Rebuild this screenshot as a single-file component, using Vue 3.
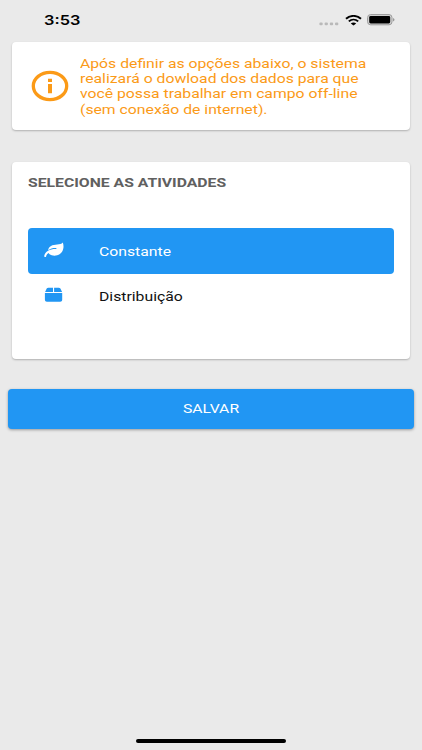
<script setup>
const notice = [
  'Após definir as opções abaixo, o sistema',
  'realizará o dowload dos dados para que',
  'você possa trabalhar em campo off-line',
  '(sem conexão de internet).'
]
const activities = [
  { name: 'Constante', icon: 'leaf', selected: true },
  { name: 'Distribuição', icon: 'box', selected: false }
]
</script>

<template>
  <div class="screen">
    <header class="status">
      <span class="time wide">3:53</span>
      <div class="signals">
        <svg class="dots" width="20" height="4" viewBox="0 0 20 4">
          <rect v-for="i in 4" :key="i" :x="(i - 1) * 5.2 + 0.4" y="0.5" width="3.3" height="2.8" rx="1" />
        </svg>
        <svg class="wifi" width="17" height="11" viewBox="0 0 17 11">
          <path d="M1 3.8C5.2-.1 11.8-.1 16 3.8M3.8 6.4c2.7-2.4 6.7-2.4 9.4 0" fill="none" stroke="#000" stroke-width="1.9" />
          <path d="M5.8 8.4c1.5-1.3 3.9-1.3 5.4 0L8.5 10.6z" />
        </svg>
        <svg class="battery" width="28" height="12" viewBox="0 0 28 12">
          <rect x="0.6" y="0.6" width="24.4" height="10.2" rx="3" fill="#d6d6d6" stroke="#999" stroke-width="1" />
          <rect x="2.2" y="2" width="21" height="7.4" rx="1.4" />
          <path d="M26 4v3.6q1.5-.5 1.5-1.8T26 4z" fill="#999" />
        </svg>
      </div>
    </header>

    <section class="card notice">
      <svg class="info" width="38" height="32" viewBox="0 0 38 32">
        <ellipse cx="19" cy="16" rx="16.7" ry="13.6" fill="none" stroke="#fb9a17" stroke-width="3.3" />
        <path d="M17 8.8h4v3.1h-4zM17 14.1h4v9.2h-4z" fill="#fb9a17" />
      </svg>
      <p class="message">
        <span v-for="line in notice" :key="line" class="line wide">{{ line }}</span>
      </p>
    </section>

    <section class="card activities">
      <h2 class="title"><span class="wide">SELECIONE AS ATIVIDADES</span></h2>
      <ul class="list">
        <li v-for="a in activities" :key="a.name" class="item" :class="{ selected: a.selected }">
          <svg v-if="a.icon === 'leaf'" class="icon" width="20" height="16" viewBox="0 0 20 16">
            <path d="M18.800.6c-1.200 1.500-3.200 1.800-5.600 1.900C8.600 2.700 4.400 4.200 4.200 8.300c2.500-2 5.300-2.500 7.800-2.300.8.1.8 1.100 0 1.100C6.400 6.900 1 9.600.2 14c-.2 1.100 1.700 1.300 1.900.4.300-1.400 1.100-2.500 2.300-3.400 1.900 2.300 5.200 3.300 8.800 2.300C18.800 11.800 20.700 5.800 18.800.6z" />
          </svg>
          <svg v-else class="icon" width="20" height="16" viewBox="0 0 20 16">
            <path d="M.9 6h17.300v6.800c0 1.200-.8 1.900-2 1.900H2.900c-1.200 0-2-.7-2-1.900zM1.100 5.100 2.700 1.600Q3.200.7 4.400.7h4.600v4.400zM10.100.7h4.600q1.200 0 1.700.9l1.700 3.500h-8z" />
          </svg>
          <span class="name wide">{{ a.name }}</span>
        </li>
      </ul>
    </section>

    <button class="save"><span class="wide">SALVAR</span></button>
    <div class="home"></div>
  </div>
</template>

<style>
body {
  background: #eaeaea;
}
</style>

<style scoped>
.screen {
  box-sizing: border-box;
  display: flex;
  flex-direction: column;
  width: 422px;
  height: 750px;
  overflow: hidden;
  background: #eaeaea;
  font-family: Roboto, sans-serif;
  font-size: 12.9px;
}
.wide {
  display: inline-block;
  white-space: nowrap;
  transform: scaleX(1.222);
  transform-origin: left center;
}
.status {
  display: flex;
  justify-content: space-between;
  height: 42.4px;
  padding: 0 27px 0 44px;
  flex: none;
}
.time {
  font: 600 13.4px/40px Inter, sans-serif;
}
.signals {
  display: flex;
  height: 40px;
  align-items: center;
}
.dots {
  margin: 7px 5.500px 0 0;
  fill: #b9b9b9;
}
.wifi {
  margin-right: 5.500px;
}
.card {
  box-sizing: border-box;
  flex: none;
  margin: 0 12px;
  background: #fff;
  border-radius: 4px;
  box-shadow: 0 1px 2px rgba(0, 0, 0, 0.25);
}
.notice {
  display: flex;
  align-items: center;
  height: 87.200px;
  padding-left: 19px;
}
.info {
  flex: none;
}
.message {
  margin: 1px 0 0 11px;
  color: #fb9a17;
}
.line {
  display: block;
  line-height: 15.4px;
}
.activities {
  height: 197px;
  margin-top: 32.800px;
  padding: 0 16px;
}
.title {
  height: 66.100px;
  margin: 0;
  font-size: 12.9px;
  font-weight: 700;
  line-height: 41px;
  color: #606060;
}
.list {
  margin: 0;
  padding: 0;
  list-style: none;
}
.item {
  display: flex;
  align-items: center;
  height: 45.200px;
  padding-left: 15.500px;
  border-radius: 4px;
  color: #111;
}
.icon {
  margin-bottom: 2px;
  fill: #2196f3;
}
.name {
  margin-left: 35.500px;
}
.selected {
  background: #2196f3;
  color: #fff;
}
.selected .icon {
  fill: #fff;
}
.save {
  flex: none;
  height: 40.400px;
  margin: 29.300px 8px 0;
  padding: 0;
  border: 0;
  border-radius: 4px;
  background: #2196f3;
  color: #fff;
  font: 400 12.9px/40px Roboto, sans-serif;
  box-shadow: 0 1px 3px rgba(0, 0, 0, 0.35);
}
.save .wide {
  transform-origin: center;
}
.home {
  width: 150px;
  height: 4px;
  margin: auto auto 7px;
  border-radius: 3px;
  background: #000;
}
</style>
